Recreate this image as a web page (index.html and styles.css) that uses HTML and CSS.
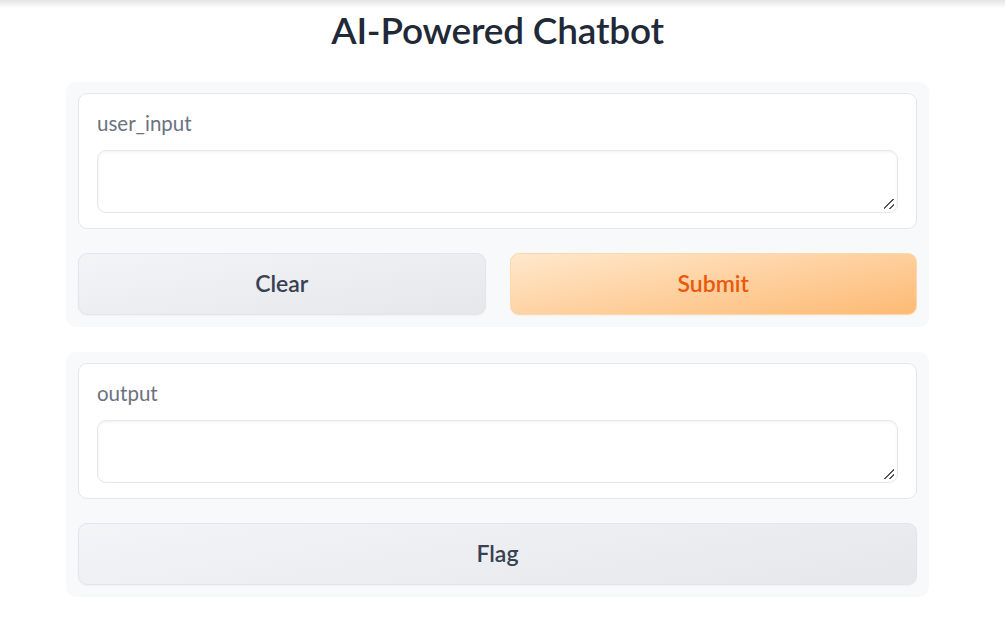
FILE: index.html
```html
<!DOCTYPE html>
<html>
<head>
<meta charset="utf-8">
<link rel="stylesheet" href="styles.css">
</head>
<body>
<div class="topshade"></div>
<main class="page">
  <h1 class="title">AI-Powered Chatbot</h1>
  <section class="panel">
    <div class="block">
      <label class="label">user_input</label>
      <div class="textarea"><span class="grip"></span></div>
    </div>
    <div class="btnrow">
      <button class="btn secondary">Clear</button>
      <button class="btn primary">Submit</button>
    </div>
  </section>
  <section class="panel">
    <div class="block">
      <label class="label">output</label>
      <div class="textarea"><span class="grip"></span></div>
    </div>
    <div class="btnrow single">
      <button class="btn secondary">Flag</button>
    </div>
  </section>
</main>
</body>
</html>
```
FILE: styles.css
```css
* { box-sizing: border-box; }
html, body { margin: 0; padding: 0; background: #ffffff; }
body {
  font-family: "Lato", "Liberation Sans", sans-serif;
  color: #1f2937;
  height: 619px;
  overflow: hidden;
}
.topshade {
  height: 8px;
  background: linear-gradient(to bottom, #e4e4e6, #ffffff);
}
.page {
  width: 995px;
  display: flex;
  flex-direction: column;
  align-items: center;
}
.title {
  margin: 1px 0 0 0;
  height: 73px;
  font-size: 37px;
  font-weight: 600;
  line-height: 42px;
  color: #1f2937;
  letter-spacing: -0.2px;
}
.panel {
  width: 863px;
  background: #f8f9fb;
  border-radius: 10px;
  padding: 11px 12px 12px 12px;
  display: flex;
  flex-direction: column;
  gap: 24px;
  margin-bottom: 25px;
}
.block {
  background: #ffffff;
  border: 1px solid #e5e7eb;
  border-radius: 9px;
  padding: 17px 18px 15px 18px;
  display: flex;
  flex-direction: column;
  gap: 15px;
}
.label {
  font-size: 20.5px;
  line-height: 24px;
  color: #6b7280;
}
.textarea {
  position: relative;
  height: 63px;
  border: 1px solid #e5e7eb;
  border-radius: 9px;
  background: #ffffff;
  box-shadow: inset 0 1px 3px rgba(0,0,0,0.06);
}
.grip {
  position: absolute;
  right: 3px;
  bottom: 3px;
  width: 10px;
  height: 10px;
  background:
    linear-gradient(135deg, transparent 45%, #555 45%, #555 55%, transparent 55%) ,
    linear-gradient(135deg, transparent 73%, #555 73%, #555 83%, transparent 83%);
}
.btnrow {
  display: flex;
  gap: 24px;
}
.btn {
  flex: 1;
  height: 62px;
  border-radius: 9px;
  font-family: inherit;
  font-size: 23px;
  font-weight: 600;
  cursor: pointer;
  padding: 0 0 2px 0;
}
.secondary {
  background: linear-gradient(170deg, #f3f4f6, #e6e7eb);
  border: 1px solid #e3e5e9;
  color: #374151;
  box-shadow: 0 1px 2px rgba(0,0,0,0.04);
}
.primary {
  background: linear-gradient(170deg, #ffe8cc, #fdba74);
  border: 1px solid #fed7aa;
  color: #ea580c;
  box-shadow: 0 1px 2px rgba(0,0,0,0.04);
}
```
